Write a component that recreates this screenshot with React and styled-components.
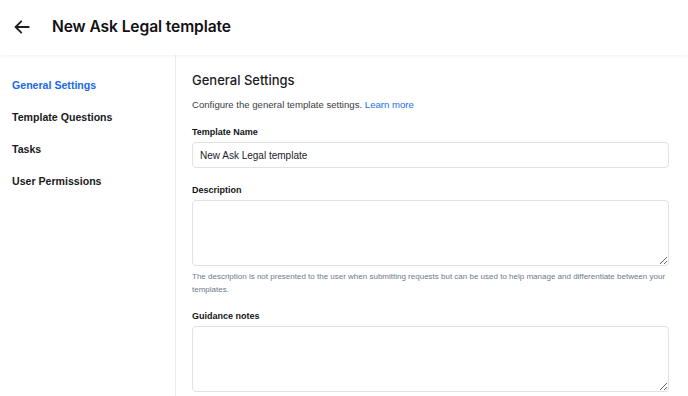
import React from 'react';
import styled, { createGlobalStyle } from 'styled-components';

const GlobalStyle = createGlobalStyle`
  html, body {
    margin: 0;
    padding: 0;
    background: #ffffff;
  }
  body {
    font-family: 'Liberation Sans', Arial, sans-serif;
    color: #1b1b1f;
  }
  * {
    box-sizing: border-box;
  }
`;

const Page = styled.div`
  display: flex;
  flex-direction: column;
  height: 396px;
  overflow: hidden;
`;

const Header = styled.header`
  display: flex;
  align-items: center;
  gap: 20px;
  height: 55px;
  padding: 0 0 2px 12px;
  background: #ffffff;
  box-shadow: 0 1px 4px rgba(0, 0, 0, 0.06);
  position: relative;
  z-index: 1;
`;

const BackButton = styled.button`
  display: inline-flex;
  align-items: center;
  justify-content: center;
  width: 20px;
  height: 20px;
  padding: 0;
  border: 0;
  background: none;
  color: #1f1f24;
  cursor: pointer;
`;

const Title = styled.h1`
  margin: 0;
  font-family: Inter, 'Noto Sans', sans-serif;
  font-size: 15.6px;
  font-weight: 600;
  letter-spacing: -0.1px;
  color: #111114;
`;

const Body = styled.div`
  display: flex;
  flex: 1;
  min-height: 0;
`;

const Sidebar = styled.nav`
  display: flex;
  flex-direction: column;
  gap: 18px;
  width: 176px;
  padding: 23px 0 0 12px;
  border-right: 1px solid #ededed;
`;

const NavItem = styled.a`
  font-size: 10.6px;
  font-weight: 700;
  line-height: 14px;
  color: ${p => (p.active ? '#1769ea' : '#1a1a1d')};
  text-decoration: none;
  cursor: pointer;
`;

const Main = styled.main`
  flex: 1;
  padding: 16px 19px 0 16px;
`;

const Heading = styled.h2`
  margin: 0 0 9px;
  font-family: Inter, 'Noto Sans', sans-serif;
  font-size: 13px;
  font-weight: 500;
  line-height: 18px;
  color: #1b1b1f;
`;

const Intro = styled.p`
  margin: 0 0 14px;
  font-size: 9.6px;
  line-height: 14px;
  color: #3d3d44;
`;

const Link = styled.a`
  color: #1a6ee8;
  text-decoration: none;
`;

const Field = styled.div`
  display: flex;
  flex-direction: column;
  gap: 4px;
  margin-bottom: ${p => p.spacing || 16}px;
`;

const Label = styled.label`
  font-size: 9px;
  font-weight: 700;
  line-height: 12px;
  color: #141417;
`;

const Input = styled.input`
  height: 26px;
  padding: 0 7px;
  border: 1px solid #e2e2e5;
  border-radius: 4px;
  font-family: 'Liberation Sans', Arial, sans-serif;
  font-size: 10px;
  color: #222226;
  outline: none;
`;

const TextArea = styled.textarea`
  height: 66px;
  padding: 6px 7px;
  border: 1px solid #e2e2e5;
  border-radius: 4px;
  font-family: 'Liberation Sans', Arial, sans-serif;
  font-size: 10px;
  resize: vertical;
  outline: none;
`;

const Hint = styled.p`
  margin: 0;
  font-size: 8px;
  line-height: 13px;
  color: #6d7a8c;
`;

const ArrowLeft = () => (
  <svg width="18" height="18" viewBox="0 0 24 24" fill="none" stroke="currentColor" strokeWidth="2.4" strokeLinecap="round" strokeLinejoin="round">
    <path d="M21 12H3.5" />
    <path d="M11 4.5L3.5 12l7.5 7.5" />
  </svg>
);

const navItems = ['General Settings', 'Template Questions', 'Tasks', 'User Permissions'];

export default function App() {
  return (
    <Page>
      <GlobalStyle />
      <Header>
        <BackButton aria-label="Back">
          <ArrowLeft />
        </BackButton>
        <Title>New Ask Legal template</Title>
      </Header>
      <Body>
        <Sidebar>
          {navItems.map((item, i) => (
            <NavItem key={item} active={i === 0}>
              {item}
            </NavItem>
          ))}
        </Sidebar>
        <Main>
          <Heading>General Settings</Heading>
          <Intro>
            Configure the general template settings. <Link>Learn more</Link>
          </Intro>
          <Field>
            <Label>Template Name</Label>
            <Input defaultValue="New Ask Legal template" />
          </Field>
          <Field spacing={14}>
            <Label>Description</Label>
            <TextArea />
            <Hint>
              The description is not presented to the user when submitting requests but can be used to help manage
              and differentiate between your templates.
            </Hint>
          </Field>
          <Field>
            <Label>Guidance notes</Label>
            <TextArea />
          </Field>
        </Main>
      </Body>
    </Page>
  );
}
